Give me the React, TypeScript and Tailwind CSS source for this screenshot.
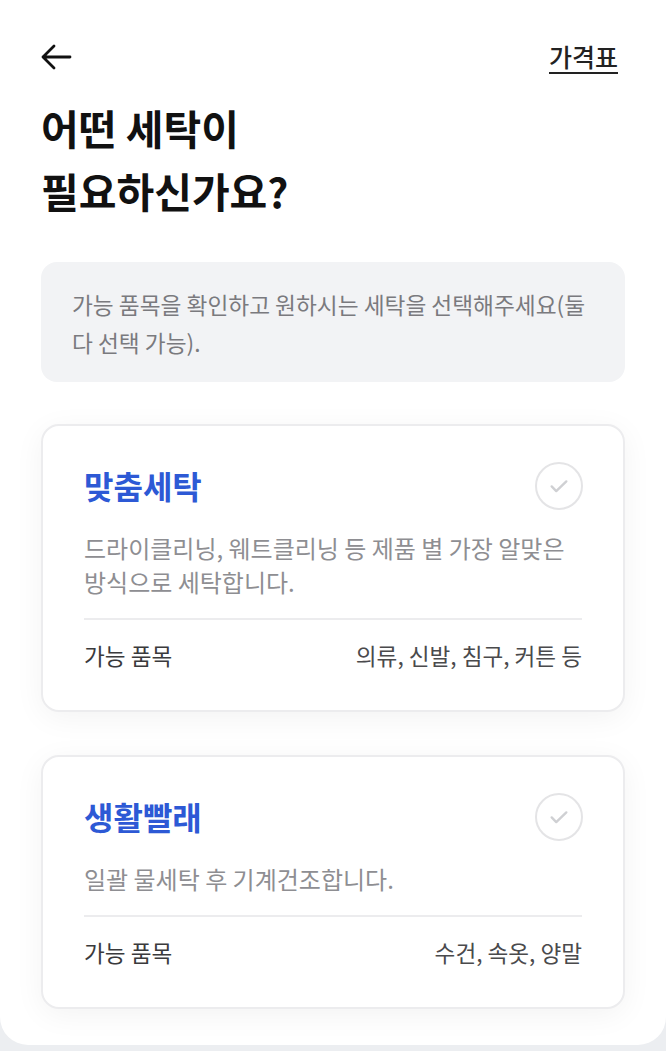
const font = { fontFamily: '"Noto Sans CJK KR", "Noto Sans", sans-serif' }

interface ServiceCardProps {
  title: string
  lines: string[]
  items: string
}

function CheckCircle() {
  return (
    <div className="flex h-[48px] w-[48px] shrink-0 items-center justify-center rounded-full border-2 border-[#e4e4e6]">
      <svg width="22" height="22" viewBox="0 0 24 24" fill="none">
        <path d="M4 12.5l5 5L20 7" stroke="#cfd0d3" strokeWidth="2.6" strokeLinecap="round" strokeLinejoin="round" />
      </svg>
    </div>
  )
}

function ServiceCard({ title, lines, items }: ServiceCardProps) {
  return (
    <div className="rounded-[18px] border-2 border-[#ececee] bg-white px-[41px] pt-[34px] pb-[39px] shadow-[0_6px_30px_rgba(0,0,0,0.05)]">
      <div className="flex items-center justify-between">
        <h2 className="text-[32px] leading-[40px] font-bold text-[#2d59d5]">{title}</h2>
        <div className="-mr-[1px] mt-[2px]">
          <CheckCircle />
        </div>
      </div>
      <p className="mt-[21px] text-[24px] leading-[34px] whitespace-nowrap text-[#8e8e92]">
        {lines.map((l, i) => (
          <span key={i}>
            {l}
            {i < lines.length - 1 && <br />}
          </span>
        ))}
      </p>
      <div className="mt-[19px] h-[2px] bg-[#ececee]" />
      <div className="mt-[21px] flex items-center justify-between text-[22.6px] leading-[30px] text-[#3a3a3c]">
        <span>가능 품목</span>
        <span className="text-[#4a4a4c]">{items}</span>
      </div>
    </div>
  )
}

export default function App() {
  return (
    <div className="min-h-screen bg-[#eceef1]" style={font}>
      <div className="h-[1045px] overflow-hidden rounded-b-[28px] bg-white px-[41px]">
        <header className="mt-[40px] flex h-[34px] items-center justify-between">
          <svg width="32" height="32" viewBox="0 0 32 32" fill="none" className="-ml-[1px]">
            <path d="M30 16H3M14 5L3 16l11 11" stroke="#111" strokeWidth="2.8" strokeLinecap="round" strokeLinejoin="round" />
          </svg>
          <a className="mr-[7px] border-b-2 border-[#222] text-[25px] leading-[31px] font-medium text-[#222]">가격표</a>
        </header>

        <h1 className="mt-[22px] text-[41px] leading-[63px] font-bold text-[#111]">
          어떤 세탁이
          <br />
          필요하신가요?
        </h1>

        <div className="mt-[40px] rounded-[16px] bg-[#f2f3f5] px-[31px] pt-[24px] pb-[20px] text-[22.7px] leading-[38px] whitespace-nowrap text-[#7a7a7e]">
          가능 품목을 확인하고 원하시는 세탁을 선택해주세요(둘
          <br />
          다 선택 가능).
        </div>

        <div className="mt-[42px] flex flex-col gap-[43px]">
          <ServiceCard
            title="맞춤세탁"
            lines={['드라이클리닝, 웨트클리닝 등 제품 별 가장 알맞은', '방식으로 세탁합니다.']}
            items="의류, 신발, 침구, 커튼 등"
          />
          <ServiceCard title="생활빨래" lines={['일괄 물세탁 후 기계건조합니다.']} items="수건, 속옷, 양말" />
        </div>
      </div>
    </div>
  )
}
